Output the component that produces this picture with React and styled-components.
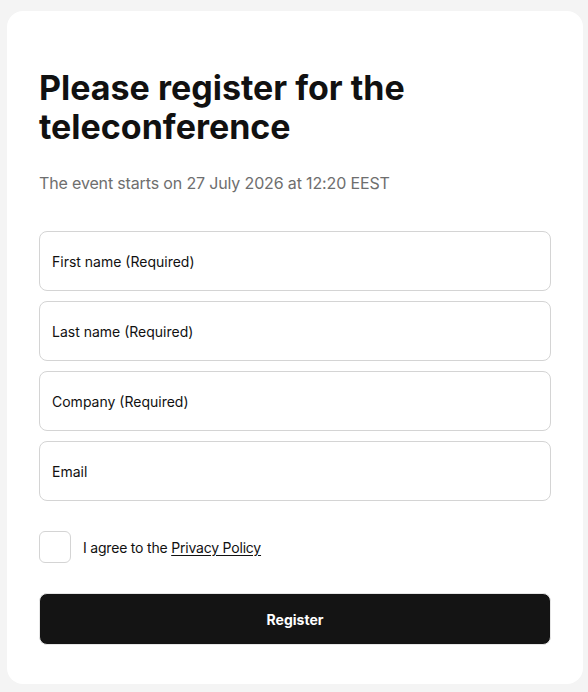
import { useState } from "react";
import styled, { createGlobalStyle } from "styled-components";

const Global = createGlobalStyle`
  * { box-sizing: border-box; }
  body {
    margin: 0;
    background: #f4f4f4;
    font-family: Inter, "Noto Sans", sans-serif;
    color: #111;
  }
`;

const Page = styled.div`
  padding: 11px 5px 7px 7px;
`;

const Card = styled.form`
  background: #fff;
  border-radius: 16px;
  padding: 57px 32px 39px;
  display: flex;
  flex-direction: column;
`;

const Title = styled.h1`
  margin: 0;
  font-size: 34px;
  line-height: 39px;
  font-weight: 700;
  color: #111;
`;

const Subtitle = styled.p`
  margin: 25px 0 36px;
  font-size: 16px;
  line-height: 24px;
  letter-spacing: -0.15px;
  color: #6e6e6e;
`;

const Fields = styled.div`
  display: flex;
  flex-direction: column;
  gap: 10px;
`;

const Input = styled.input`
  height: 60px;
  width: 100%;
  border: 1px solid #d4d4d4;
  border-radius: 8px;
  padding: 0 12px;
  font-family: inherit;
  font-size: 14px;
  color: #111;
  outline: none;
  &::placeholder {
    color: #111;
  }
`;

const AgreeRow = styled.label`
  display: flex;
  align-items: center;
  gap: 12px;
  margin-top: 30px;
  font-size: 14px;
  letter-spacing: -0.2px;
  color: #111;
`;

const Box = styled.span`
  width: 32px;
  height: 32px;
  border: 1px solid #d4d4d4;
  border-radius: 6px;
  background: ${(p) => (p.$checked ? "#111" : "#fff")};
  flex-shrink: 0;
`;

const Link = styled.a`
  color: #111;
  text-decoration: underline;
  text-underline-offset: 2px;
`;

const Button = styled.button`
  margin-top: 30px;
  height: 52px;
  width: 100%;
  border: 1px solid #e6e6e6;
  border-radius: 8px;
  background: #141414;
  color: #fff;
  font-family: inherit;
  font-size: 14px;
  font-weight: 700;
  cursor: pointer;
`;

const fields = ["First name (Required)", "Last name (Required)", "Company (Required)", "Email"];

export default function App() {
  const [agree, setAgree] = useState(false);
  return (
    <>
      <Global />
      <Page>
        <Card onSubmit={(e) => e.preventDefault()}>
          <Title>Please register for the teleconference</Title>
          <Subtitle>The event starts on 27 July 2026 at 12:20 EEST</Subtitle>
          <Fields>
            {fields.map((f) => (
              <Input key={f} placeholder={f} />
            ))}
          </Fields>
          <AgreeRow onClick={() => setAgree(!agree)}>
            <Box $checked={agree} />
            <span>
              I agree to the <Link href="#">Privacy Policy</Link>
            </span>
          </AgreeRow>
          <Button type="submit">Register</Button>
        </Card>
      </Page>
    </>
  );
}
